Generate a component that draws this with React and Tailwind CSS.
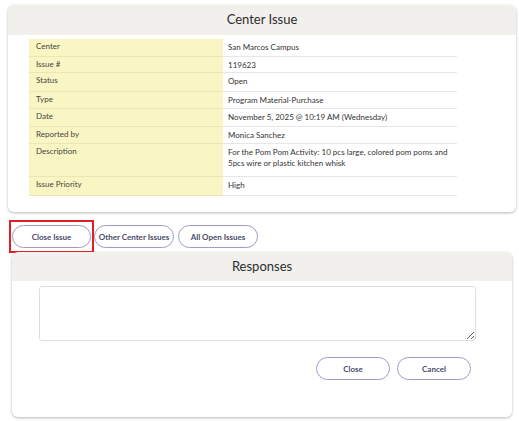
import React from "react";

const rows = [
  ["Center", "San Marcos Campus", "h-[18px]"],
  ["Issue #", "119623", "h-[16px]"],
  ["Status", "Open", "h-[19px]"],
  ["Type", "Program Material-Purchase", "h-[17px]"],
  ["Date", "November 5, 2025 @ 10:19 AM (Wednesday)", "h-[18px]"],
  ["Reported by", "Monica Sanchez", "h-[17px]"],
  [
    "Description",
    "For the Pom Pom Activity: 10 pcs large, colored pom poms and 5pcs wire or plastic kitchen whisk",
    "h-[33px]",
  ],
  ["Issue Priority", "High", "h-[19px]"],
];

function Btn({ children, w = "w-[80px]" }) {
  return (
    <button
      className={`${w} h-[23px] rounded-full border border-[#9d9dc9] bg-white text-[8px] font-bold text-[#4b4b6b] flex items-center justify-center`}
    >
      {children}
    </button>
  );
}

export default function App() {
  return (
    <div
      className="w-[519px] h-[421px] bg-white text-[#3a3a3a] overflow-hidden"
      style={{ fontFamily: "Lato, 'Noto Sans', sans-serif" }}
    >
      <div className="pl-[8px] pr-[3px] pt-[5px]">
        {/* Center Issue card */}
        <div className="w-[508px] h-[207px] rounded-[6px] bg-white shadow-[0_1px_3px_rgba(0,0,0,0.28)] overflow-hidden">
          <div className="h-[30px] bg-[#f1f0ec] flex items-center justify-center text-[13px] text-[#2e2e2e]">
            Center Issue
          </div>
          <div className="ml-[21px] mt-[4px] w-[428px]">
            {rows.map(([label, value, h], i) => (
              <div key={i} className={`flex ${h}`}>
                <div className="w-[194px] bg-[#faf6c3] border-b border-[#ebe6b8] pl-[7px] pt-[2px] text-[8px] leading-[11px] text-[#444]">
                  {label}
                </div>
                <div className="flex-1 border-b border-[#e6e6e6] pl-[5px] pr-0 pt-[3px] text-[8px] leading-[11px] text-[#333]">
                  {value}
                </div>
              </div>
            ))}
          </div>
        </div>

        {/* Buttons row */}
        <div className="mt-[8px] ml-[1px] flex items-center">
          <div className="border-2 border-[#e41e26] px-[1px] py-[3px]">
            <Btn w="w-[79px]">Close Issue</Btn>
          </div>
          <div className="flex items-center gap-[4px]">
            <Btn>Other Center Issues</Btn>
            <Btn>All Open Issues</Btn>
          </div>
        </div>

        {/* Responses card */}
        <div className="-mt-px ml-[4px] w-[500px] h-[165px] rounded-[6px] bg-white shadow-[0_1px_3px_rgba(0,0,0,0.28)] overflow-hidden flex flex-col">
          <div className="h-[29px] bg-[#f1f0ec] flex items-center justify-center text-[13px] text-[#2e2e2e]">
            Responses
          </div>
          <div className="mt-[5px] ml-[27px] w-[437px]">
            <textarea className="block w-full h-[55px] rounded-[3px] border border-[#dedede] bg-white outline-none text-[8px]" />
          </div>
          <div className="mt-[16px] flex justify-end gap-[7px] pr-[41px]">
            <Btn w="w-[74px]">Close</Btn>
            <Btn w="w-[74px]">Cancel</Btn>
          </div>
        </div>
      </div>
    </div>
  );
}
